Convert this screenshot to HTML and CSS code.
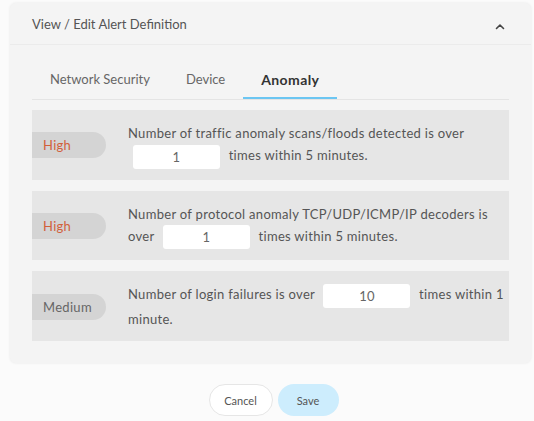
FILE: index.html
```html
<!DOCTYPE html>
<html>
<head>
<meta charset="utf-8">
<link rel="stylesheet" href="styles.css">
</head>
<body>
<div class="page">
  <section class="card">
    <header class="card-head">
      <span class="card-title">View / Edit Alert Definition</span>
      <svg class="chev" width="10" height="7" viewBox="0 0 10 7"><path d="M1.5 5.5 L5 2 L8.5 5.5" fill="none" stroke="#444" stroke-width="1.6" stroke-linecap="round" stroke-linejoin="round"/></svg>
    </header>
    <div class="card-body">
      <nav class="tabs">
        <span class="tab">Network Security</span>
        <span class="tab">Device</span>
        <span class="tab active">Anomaly</span>
      </nav>
      <div class="rules">
        <div class="rule">
          <span class="badge high">High</span>
          <p class="desc">Number of traffic anomaly scans/floods detected is over <span class="num">1</span> times within 5 minutes.</p>
        </div>
        <div class="rule">
          <span class="badge high">High</span>
          <p class="desc">Number of protocol anomaly TCP/UDP/ICMP/IP decoders is over <span class="num">1</span> times within 5 minutes.</p>
        </div>
        <div class="rule">
          <span class="badge">Medium</span>
          <p class="desc">Number of login failures is over <span class="num">10</span> times within 1 minute.</p>
        </div>
      </div>
    </div>
  </section>
  <div class="actions">
    <button class="btn cancel">Cancel</button>
    <button class="btn save">Save</button>
  </div>
</div>
</body>
</html>
```
FILE: styles.css
```css
html, body {
  margin: 0;
  padding: 0;
  background: #fbfbfb;
  font-family: Lato, "Open Sans", sans-serif;
  color: #555;
}
.page {
  padding: 3px 3px 0 10px;
}
.card {
  background: #f4f4f4;
  border-radius: 6px;
  box-shadow: 0 0 3px rgba(0,0,0,0.08);
}
.card-head {
  height: 41px;
  display: flex;
  align-items: center;
  justify-content: space-between;
  padding: 0 26px 0 22px;
  border-bottom: 1px solid #ebebeb;
}
.card-title {
  font-size: 13px;
  color: #555;
  padding-top: 1px;
}
.chev {
  margin-top: 6px;
}
.card-body {
  padding: 17px 22px 22px 22px;
}
.tabs {
  display: flex;
  border-bottom: 1px solid #e4e4e4;
}
.tab {
  padding: 0 18px;
  line-height: 35px;
  font-size: 13px;
  color: #666;
  border-bottom: 2px solid transparent;
}
.tab.active {
  font-weight: bold;
  font-size: 14px;
  letter-spacing: 0.4px;
  color: #333;
  border-bottom-color: #6cc6f2;
}
.rules {
  margin-top: 10px;
  display: flex;
  flex-direction: column;
  gap: 11px;
}
.rule {
  background: #e6e6e6;
  display: flex;
  align-items: center;
  padding: 12px 0 11px 0;
  min-height: 46px;
}
.badge {
  flex: none;
  width: 63px;
  height: 26px;
  line-height: 26px;
  padding-left: 11px;
  background: #d4d4d4;
  border-radius: 0 13px 13px 0;
  font-size: 13px;
  letter-spacing: 0.3px;
  color: #666;
}
.badge.high {
  color: #d2603a;
}
.desc {
  margin: 0 0 0 22px;
  font-size: 13px;
  letter-spacing: 0.3px;
  line-height: 22px;
  color: #555;
  width: 382px;
}
.num {
  display: inline-block;
  width: 87px;
  height: 24px;
  line-height: 24px;
  margin: 0 5px;
  background: #fff;
  border-radius: 3px;
  text-align: center;
  vertical-align: middle;
  color: #666;
}
.actions {
  display: flex;
  justify-content: center;
  gap: 5px;
  margin-top: 21px;
  padding-left: 6px;
}
.btn {
  height: 32px;
  border-radius: 16px;
  font-family: Lato, "Open Sans", sans-serif;
  font-size: 11px;
  color: #555;
  padding: 0;
}
.cancel {
  width: 64px;
  background: #fff;
  border: 1px solid #e6e6e6;
}
.save {
  width: 61px;
  background: #cdedfd;
  border: none;
}
```
